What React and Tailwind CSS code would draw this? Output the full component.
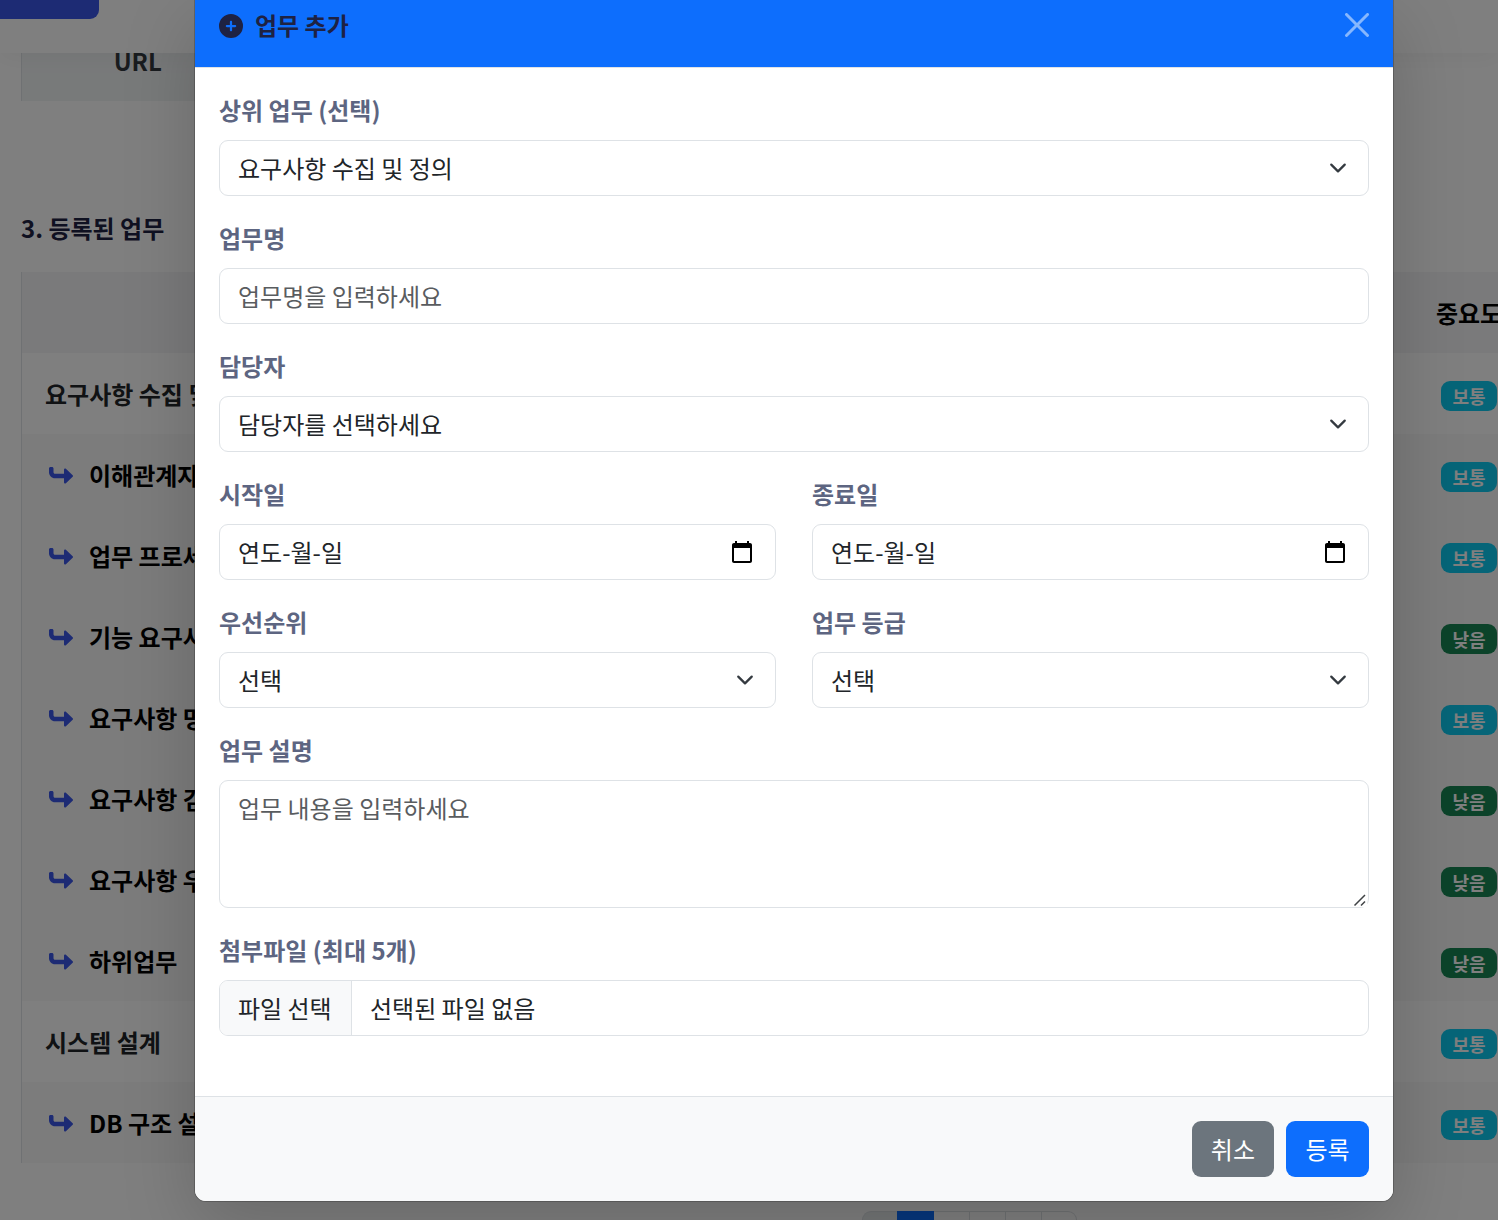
import { FaCirclePlus, FaTurnUp } from "react-icons/fa6";

const tasks = [
  { name: "요구사항 수집 및", level: "보통", parent: true },
  { name: "이해관계자", level: "보통" },
  { name: "업무 프로세", level: "보통" },
  { name: "기능 요구사", level: "낮음" },
  { name: "요구사항 명", level: "보통" },
  { name: "요구사항 검", level: "낮음" },
  { name: "요구사항 우", level: "낮음" },
  { name: "하위업무", level: "낮음" },
  { name: "시스템 설계", level: "보통", parent: true },
  { name: "DB 구조 설", level: "보통" },
];

const controlClass =
  "block w-full rounded-[9px] border border-[#dee2e6] bg-white px-[18px] text-[24px] leading-[36px] text-[#212529] placeholder:text-[#595c5f] placeholder:opacity-100";

function Field({ id, label, children }) {
  return (
    <div className="mb-6">
      <label htmlFor={id} className="mb-3 block text-[24px] leading-[36px] font-bold text-[#5d6581]">
        {label}
      </label>
      {children}
    </div>
  );
}

function SelectField({ id, label, value }) {
  return (
    <Field id={id} label={label}>
      <div className="relative">
        <select id={id} className={controlClass + " h-14 appearance-none"}>
          <option>{value}</option>
        </select>
        <svg
          viewBox="0 0 16 16"
          className="pointer-events-none absolute top-[19px] right-[22px] size-[18px]"
          fill="none"
          stroke="#343a40"
          strokeWidth="2"
          strokeLinecap="round"
          strokeLinejoin="round"
        >
          <path d="m2 5 6 6 6-6" />
        </svg>
      </div>
    </Field>
  );
}

function DateField({ id, label }) {
  return (
    <Field id={id} label={label}>
      <div className="relative">
        <input
          id={id}
          type="text"
          placeholder="연도-월-일"
          className={controlClass + " h-14 pb-[2px] placeholder:text-[#212529]"}
        />
        <button type="button" aria-label={label + " 달력"} className="absolute top-4 right-[22px]">
          <svg viewBox="0 0 24 24" className="size-6" fill="#000">
            <path d="M20 3h-1V1h-2v2H7V1H5v2H4c-1.1 0-2 .9-2 2v16c0 1.1.9 2 2 2h16c1.1 0 2-.9 2-2V5c0-1.1-.9-2-2-2zm0 18H4V8h16v13z" />
          </svg>
        </button>
      </div>
    </Field>
  );
}

function Background() {
  return (
    <div className="h-full overflow-hidden bg-white">
      <div className="relative h-[53px] bg-white shadow-[0_3px_24px_rgba(0,0,0,0.05)]">
        <button type="button" aria-label="메뉴" className="block h-[19px] w-[99px] rounded-br-[9px] bg-[#3a57e8]" />
      </div>
      <div className="-mr-[21px] pl-[21px]">
        <table className="w-full border-l border-[#dee2e6] text-[24px]">
          <tbody>
            <tr>
              <th scope="row" className="h-12 w-[232px] bg-[#f1f4f5] pb-8 leading-[16px] font-bold text-[#343a40]">
                URL
              </th>
              <td />
            </tr>
          </tbody>
        </table>
        <h2 className="mt-[109px] text-[24px] leading-[36px] font-bold text-[#1e2243]">3. 등록된 업무</h2>
        <table className="mt-[26px] w-full table-fixed border-l border-[#dee2e6] text-[24px] leading-[36px] text-black">
          <thead>
            <tr className="h-[81px] bg-[#f5f5f6]">
              <th scope="col" aria-label="업무명" />
              <th scope="col" className="w-[100px] font-bold whitespace-nowrap">
                중요도
              </th>
            </tr>
          </thead>
          <tbody>
            {tasks.map((task) => (
              <tr key={task.name} className={task.parent ? "h-[81px] bg-white" : "h-[81px] bg-[#f8f8f8]"}>
                <td className="px-[23px] font-bold whitespace-nowrap">
                  {task.parent ? (
                    <span className="text-[#212529]">{task.name}</span>
                  ) : (
                    <span className="flex items-center gap-4 pl-1 text-black">
                      <span className="w-6 pt-[2px]">
                        <FaTurnUp className="size-6 rotate-90 text-[#3a57e8]" />
                      </span>
                      {task.name}
                    </span>
                  )}
                </td>
                <td className="pt-[5px] text-center">
                  <span
                    className={
                      "mx-auto block h-[30px] w-14 rounded-[9px] text-[18px] leading-[30px] font-bold text-white " +
                      (task.level === "보통" ? "bg-[#0dcaf0]" : "bg-[#198754]")
                    }
                  >
                    {task.level}
                  </span>
                </td>
              </tr>
            ))}
          </tbody>
        </table>
        <nav aria-label="페이지" className="mt-12 flex pl-[841px] text-[24px]">
          <button type="button" aria-label="이전" className="h-14 w-[35px] rounded-l-[9px] border border-r-0 border-[#dee2e6] bg-[#e9ecef]" />
          <button type="button" aria-label="1" className="h-14 w-[37px] bg-[#0d6efd]" />
          <button type="button" aria-label="2" className="h-14 w-9 border-y border-r border-[#dee2e6]" />
          <button type="button" aria-label="3" className="h-14 w-9 border-y border-r border-[#dee2e6]" />
          <button type="button" aria-label="4" className="h-14 w-9 border-y border-r border-[#dee2e6]" />
          <button type="button" aria-label="다음" className="h-14 w-[35px] rounded-r-[9px] border-y border-r border-[#dee2e6]" />
        </nav>
      </div>
    </div>
  );
}

function TaskModal() {
  return (
    <div
      role="dialog"
      aria-modal="true"
      aria-labelledby="modal-title"
      className="overflow-hidden rounded-b-xl border border-t-0 border-black/20 bg-white bg-clip-padding shadow-[0_24px_72px_rgba(0,0,0,0.175)]"
    >
      <header className="flex items-center justify-between border-b border-[#dee2e6] bg-[#0d6efd] px-6 pt-[7px] pb-6">
        <h1 id="modal-title" className="flex items-center gap-3 text-[24px] leading-[36px] font-bold text-[#1e2243]">
          <span className="pt-[2px]">
            <FaCirclePlus className="size-6" />
          </span>
          업무 추가
        </h1>
        <button type="button" aria-label="닫기" className="opacity-50">
          <svg viewBox="0 0 16 16" className="size-6" fill="#fff">
            <path d="M.293.293a1 1 0 0 1 1.414 0L8 6.586 14.293.293a1 1 0 1 1 1.414 1.414L9.414 8l6.293 6.293a1 1 0 0 1-1.414 1.414L8 9.414l-6.293 6.293a1 1 0 0 1-1.414-1.414L6.586 8 .293 1.707a1 1 0 0 1 0-1.414z" />
          </svg>
        </button>
      </header>
      <form>
        <div className="px-6 pt-6 pb-9">
          <SelectField id="parent" label="상위 업무 (선택)" value="요구사항 수집 및 정의" />
          <Field id="name" label="업무명">
            <input id="name" type="text" placeholder="업무명을 입력하세요" className={controlClass + " h-14 pb-[2px]"} />
          </Field>
          <SelectField id="owner" label="담당자" value="담당자를 선택하세요" />
          <div className="grid grid-cols-2 gap-x-9">
            <DateField id="start" label="시작일" />
            <DateField id="end" label="종료일" />
            <SelectField id="priority" label="우선순위" value="선택" />
            <SelectField id="grade" label="업무 등급" value="선택" />
          </div>
          <Field id="description" label="업무 설명">
            <div className="relative">
              <textarea
                id="description"
                rows={3}
                placeholder="업무 내용을 입력하세요"
                className={controlClass + " resize-y py-[9px]"}
              />
              <svg
                viewBox="0 0 14 14"
                className="pointer-events-none absolute right-[2px] bottom-[1px] size-[14px] bg-white"
                stroke="#3f4245"
                strokeWidth="1.5"
              >
                <path d="M1.5 12.5 12 2M8 12.5 12 8.5" />
              </svg>
            </div>
          </Field>
          <Field id="files" label="첨부파일 (최대 5개)">
            <input id="files" type="file" multiple className="sr-only" />
            <label
              htmlFor="files"
              className="flex h-14 overflow-hidden rounded-[9px] border border-[#dee2e6] text-[24px] leading-[54px] text-[#212529]"
            >
              <span className="w-[132px] border-r border-[#dee2e6] bg-[#f8f9fa] px-[18px]">파일 선택</span>
              <span className="px-[18px]">선택된 파일 없음</span>
            </label>
          </Field>
        </div>
        <footer className="flex justify-end gap-3 border-t border-[#dee2e6] bg-[#f8f9fa] p-6">
          <button type="button" className="h-14 rounded-[9px] bg-[#6c757d] px-[19px] text-[24px] leading-[36px] text-white">
            취소
          </button>
          <button type="submit" className="h-14 min-w-[83px] rounded-[9px] bg-[#0d6efd] px-[19px] text-[24px] leading-[36px] text-white">
            등록
          </button>
        </footer>
      </form>
    </div>
  );
}

export default function App() {
  return (
    <div className="relative h-screen overflow-hidden font-['Noto_Sans_CJK_KR',sans-serif]">
      <Background />
      <div className="absolute inset-0 bg-black/50 pr-[104px] pl-[194px]">
        <TaskModal />
      </div>
    </div>
  );
}
